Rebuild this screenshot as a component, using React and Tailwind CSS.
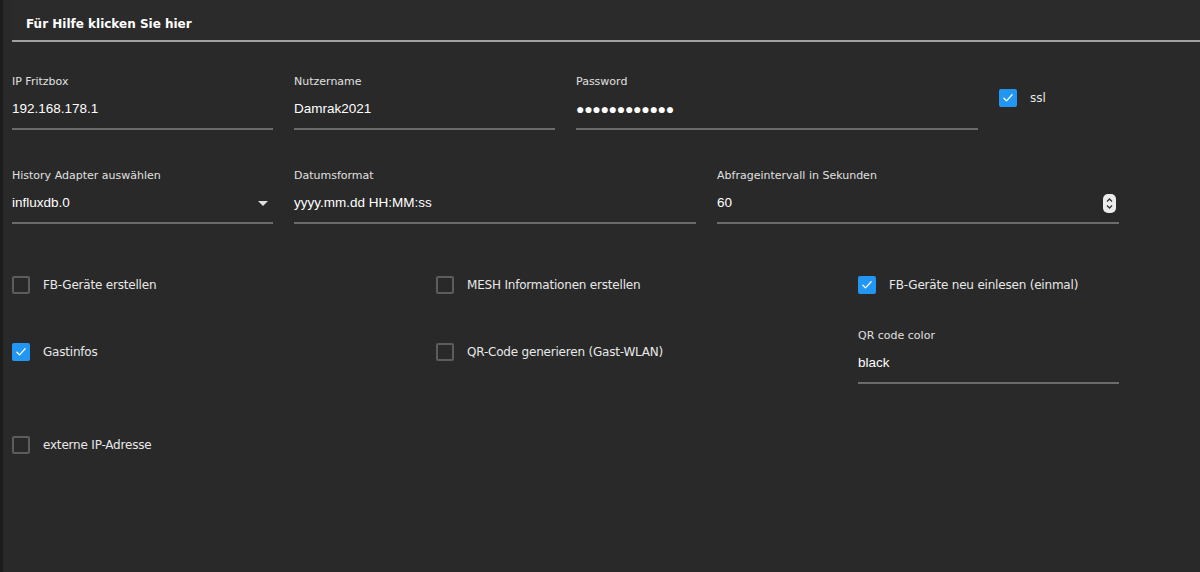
import React from 'react';

const labelFont = { fontFamily: '"DejaVu Sans", sans-serif' };

const Check = ({ checked }) =>
  checked ? (
    <span className="w-[18px] h-[18px] rounded-[2px] bg-[#2196f3] flex items-center justify-center shrink-0">
      <svg width="14" height="14" viewBox="0 0 24 24" fill="none" stroke="white" strokeWidth="2.2" strokeLinecap="round" strokeLinejoin="round">
        <path d="M5 12.5l4.5 4.5L19 6.5" />
      </svg>
    </span>
  ) : (
    <span className="w-[18px] h-[18px] rounded-[2px] border-2 border-[#5c5c5c] shrink-0" />
  );

const CheckItem = ({ checked, label }) => (
  <div className="flex items-center h-[18px]">
    <Check checked={checked} />
    <span className="ml-[13px] text-[12px] tracking-[-0.2px] text-[#e8e8e8]" style={labelFont}>{label}</span>
  </div>
);

const Field = ({ label, value, width, children, password }) => (
  <div className={`${width} shrink-0`}>
    <div className="text-[11px] text-[#e0e0e0] leading-[14px] h-[14px]" style={labelFont}>{label}</div>
    <div className="mt-[7px] h-[26px] flex items-center border-b-2 border-[#6b6b6b] pb-[6px] box-content">
      <span
        className={`flex-1 text-white ${password ? 'text-[14px] tracking-[-0.3px]' : 'text-[13.5px]'}`}
        style={{ fontFamily: '"Liberation Sans", Arial, sans-serif' }}
      >
        {value}
      </span>
      {children}
    </div>
  </div>
);

export default function App() {
  return (
    <div className="w-[1200px] h-[572px] bg-[#292929] flex overflow-hidden">
      <div className="w-[3px] bg-[#1c1c1c] shrink-0" />
      <div className="flex-1 pl-[9px]">
        <div className="h-[42px] bg-[#2b2b2b] border-b-2 border-[#a0a0a0] flex items-center pl-[14px] pt-[8px]">
          <span className="text-[12px] font-bold text-white" style={labelFont}>Für Hilfe klicken Sie hier</span>
        </div>

        <div className="flex items-start mt-[33px]">
          <Field label="IP Fritzbox" value="192.168.178.1" width="w-[261px]" />
          <div className="w-[21px]" />
          <Field label="Nutzername" value="Damrak2021" width="w-[261px]" />
          <div className="w-[21px]" />
          <Field label="Password" value="●●●●●●●●●●●●" width="w-[402px]" password />
          <div className="ml-[21px] mt-[14px] flex items-center">
            <Check checked />
            <span className="ml-[13px] text-[12px] text-[#e8e8e8]" style={labelFont}>ssl</span>
          </div>
        </div>

        <div className="flex items-start mt-[39px]">
          <Field label="History Adapter auswählen" value="influxdb.0" width="w-[261px]">
            <svg width="10" height="5" viewBox="0 0 10 5" className="mr-[5px]">
              <path d="M0 0h10L5 5z" fill="#e0e0e0" />
            </svg>
          </Field>
          <div className="w-[21px]" />
          <Field label="Datumsformat" value="yyyy.mm.dd HH:MM:ss" width="w-[402px]" />
          <div className="w-[21px]" />
          <Field label="Abfrageintervall in Sekunden" value="60" width="w-[402px]">
            <span className="w-[13px] h-[19px] rounded-[5px] bg-[#ececec] flex flex-col items-center justify-center mr-[3px]">
              <svg width="9" height="15" viewBox="0 0 9 15" fill="none" stroke="#333" strokeWidth="1.3">
                <path d="M2 5.5l2.5-2.5 2.5 2.5" />
                <path d="M2 9.5l2.5 2.5 2.5-2.5" />
              </svg>
            </span>
          </Field>
        </div>

        <div className="grid grid-cols-[424px_422px_342px] mt-[52px]">
          <CheckItem label="FB-Geräte erstellen" />
          <CheckItem label="MESH Informationen erstellen" />
          <CheckItem checked label="FB-Geräte neu einlesen (einmal)" />
        </div>

        <div className="grid grid-cols-[424px_422px_342px] mt-[35px] items-start">
          <div className="mt-[14px]"><CheckItem checked label="Gastinfos" /></div>
          <div className="mt-[14px]"><CheckItem label="QR-Code generieren (Gast-WLAN)" /></div>
          <Field label="QR code color" value="black" width="w-[261px]" />
        </div>

        <div className="mt-[52px]">
          <CheckItem label="externe IP-Adresse" />
        </div>
      </div>
    </div>
  );
}
